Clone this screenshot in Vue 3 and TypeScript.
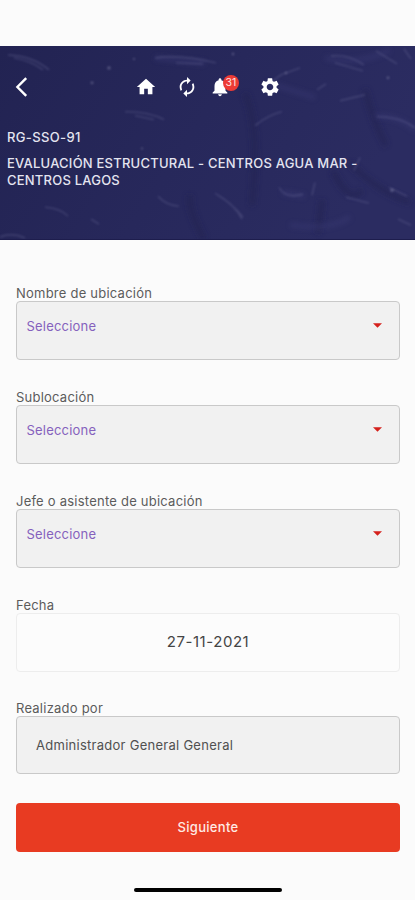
<script setup lang="ts">
interface Field {
  label: string
  value: string
  kind: 'select' | 'date' | 'text'
}

const fields: Field[] = [
  { label: 'Nombre de ubicación', value: 'Seleccione', kind: 'select' },
  { label: 'Sublocación', value: 'Seleccione', kind: 'select' },
  { label: 'Jefe o asistente de ubicación', value: 'Seleccione', kind: 'select' },
  { label: 'Fecha', value: '27-11-2021', kind: 'date' },
  { label: 'Realizado por', value: 'Administrador General General', kind: 'text' },
]
const notifications = 31
</script>

<template>
  <div class="screen">
    <header class="header">
      <svg class="texture" viewBox="0 0 415 194" preserveAspectRatio="none" aria-hidden="true">
        <defs>
          <linearGradient id="sea" x1="0" y1="0" x2="1" y2="0.3">
            <stop offset="0" stop-color="#222352" />
            <stop offset="0.55" stop-color="#27285b" />
            <stop offset="1" stop-color="#2b2c61" />
          </linearGradient>
          <filter id="soft"><feGaussianBlur stdDeviation="0.9" /></filter>
          <filter id="wide"><feGaussianBlur stdDeviation="2.5" /></filter>
        </defs>
        <rect width="415" height="194" fill="url(#sea)" />
        <g fill="none" stroke="#20214f" stroke-width="6" opacity="0.5" filter="url(#wide)">
          <path d="M365 44Q374 78 386 100" />
          <path d="M333 126Q350 160 362 145M350 118Q380 148 410 157" />
          <path d="M245 48Q260 80 252 160M190 150Q188 165 204 194" />
          <path d="M318 188L322 155" />
        </g>
        <g fill="none" stroke="#3a3b74" stroke-width="5" opacity="0.45" filter="url(#wide)">
          <path d="M325 12Q360 20 390 4M375 70Q400 70 415 85M290 180Q330 186 350 172" />
          <path d="M155 12L205 17M268 37L315 52M282 147L305 151" />
        </g>
        <g fill="none" stroke="#686895" stroke-width="1.4" opacity="0.42" filter="url(#soft)">
          <path d="M8 9Q33 10 49 24M14 12Q31 15 43 24" />
          <path d="M155 12Q180 8 216 17M176 17L203 18" />
          <path d="M125 66Q149 66 164 74M135 70L154 74" />
          <path d="M215 148Q231 157 243 172M218 150Q236 161 242 174" />
          <path d="M331 10Q348 8 364 19M335 17L363 25M377 71Q400 71 415 82" />
          <path d="M255 80Q269 69 282 66M269 38L281 29 300 22" />
          <path d="M279 142Q285 154 303 149M315 137L312 150M346 152L369 158" />
          <path d="M45 162Q60 163 68 171M158 151Q166 160 179 161M91 174L99 179" />
          <path d="M376 5L397 18M404 3L411 13M389 142L407 151M317 44L326 38" />
          <path d="M340 55L365 49M360 112L354 125M398 174L411 180M0 192Q12 187 25 193" />
        </g>
        <g fill="#8a8aae" opacity="0.5" filter="url(#soft)">
          <circle cx="109" cy="22" r="1.6" /><circle cx="92" cy="37" r="1.4" />
          <circle cx="134" cy="13" r="1" /><circle cx="233" cy="8" r="1.2" />
          <circle cx="286" cy="27" r="1.2" /><circle cx="388" cy="32" r="1.3" />
          <circle cx="392" cy="145" r="1.7" /><circle cx="142" cy="103" r="1" />
        </g>
      </svg>

      <nav class="toolbar">
        <button class="back" aria-label="Volver">
          <svg viewBox="0 0 14 22"><path d="M12.2 2.2 3.4 11l8.8 8.8" fill="none" stroke="#fff" stroke-width="2.4" /></svg>
        </button>
        <button class="tool home" aria-label="Inicio">
          <svg viewBox="0 0 24 24"><path d="M10 20v-6h4v6h5v-8h3L12 3 2 12h3v8z" /></svg>
        </button>
        <button class="tool sync" aria-label="Actualizar">
          <svg viewBox="0 0 24 24"><path d="M12 6v3l4-4-4-4v3c-4.42 0-8 3.58-8 8 0 1.57.46 3.03 1.24 4.26L6.7 14.8c-.45-.83-.7-1.79-.7-2.8 0-3.31 2.69-6 6-6zm6.76 1.74L17.3 9.2c.44.84.7 1.79.7 2.8 0 3.31-2.69 6-6 6v-3l-4 4 4 4v-3c4.42 0 8-3.58 8-8 0-1.57-.46-3.03-1.24-4.26z" /></svg>
        </button>
        <button class="tool bell" aria-label="Notificaciones">
          <svg viewBox="0 0 24 24"><path d="M12 22c1.1 0 2-.9 2-2h-4c0 1.1.89 2 2 2zm6-6v-5c0-3.07-1.64-5.64-4.5-6.32V4c0-.83-.67-1.5-1.5-1.5s-1.5.67-1.5 1.5v.68C7.63 5.36 6 7.92 6 11v5l-2 2v1h16v-1l-2-2z" /></svg>
          <span class="badge">{{ notifications }}</span>
        </button>
        <button class="tool gear" aria-label="Ajustes">
          <svg viewBox="0 0 24 24"><path d="M19.14 12.94c.04-.3.06-.61.06-.94 0-.32-.02-.64-.07-.94l2.03-1.58c.18-.14.23-.41.12-.61l-1.92-3.32c-.12-.22-.37-.29-.59-.22l-2.39.96c-.5-.38-1.03-.7-1.62-.94l-.36-2.54c-.04-.24-.24-.41-.48-.41h-3.84c-.24 0-.43.17-.47.41l-.36 2.54c-.59.24-1.13.57-1.62.94l-2.39-.96c-.22-.08-.47 0-.59.22L2.74 8.87c-.12.21-.08.47.12.61l2.03 1.58c-.05.3-.09.63-.09.94s.02.64.07.94l-2.03 1.58c-.18.14-.23.41-.12.61l1.92 3.32c.12.22.37.29.59.22l2.39-.96c.5.38 1.03.7 1.62.94l.36 2.54c.05.24.24.41.48.41h3.84c.24 0 .44-.17.47-.41l.36-2.54c.59-.24 1.13-.56 1.62-.94l2.39.96c.22.08.47 0 .59-.22l1.92-3.32c.12-.22.07-.47-.12-.61l-2.01-1.58zM12 15.6c-1.98 0-3.6-1.62-3.6-3.6s1.62-3.6 3.6-3.6 3.6 1.62 3.6 3.6-1.62 3.6-3.6 3.6z" /></svg>
        </button>
      </nav>

      <p class="code">RG-SSO-91</p>
      <h1 class="title">EVALUACIÓN ESTRUCTURAL - CENTROS AGUA MAR - CENTROS LAGOS</h1>
    </header>

    <main class="form">
      <div v-for="field in fields" :key="field.label" class="field">
        <span class="label">{{ field.label }}</span>
        <div class="box" :class="field.kind">
          <span>{{ field.value }}</span>
          <svg v-if="field.kind === 'select'" class="caret" viewBox="0 0 10 5"><path d="M0 0h10L5 5z" /></svg>
        </div>
      </div>
      <button class="submit">Siguiente</button>
    </main>

    <div class="home-indicator"></div>
  </div>
</template>

<style>
body {
  margin: 0;
  background: #fbfbfb;
}
</style>

<style scoped>
.screen {
  box-sizing: border-box;
  display: flex;
  flex-direction: column;
  height: 900px;
  padding: 46px 0 8px;
  overflow: hidden;
  background: #fbfbfb;
  font-family: Inter, sans-serif;
}
button {
  padding: 0;
  border: 0;
  background: none;
  font-family: inherit;
}
.header {
  position: relative;
  box-sizing: border-box;
  flex: none;
  height: 194px;
  padding: 29px 7px 0;
  border-bottom: 1px solid #1d1d4d;
  color: #e4e4f0;
}
.texture {
  position: absolute;
  inset: 0;
  width: 100%;
  height: 100%;
}
.toolbar {
  position: relative;
  display: flex;
  align-items: center;
  height: 24px;
}
.toolbar svg {
  display: block;
  fill: #fff;
}
.back {
  width: 14px;
  margin-left: 7px;
}
.back svg {
  width: 14px;
  height: 22px;
}
.tool {
  position: relative;
  width: 22px;
  height: 22px;
}
.tool svg {
  width: 22px;
  height: 22px;
}
.home {
  margin-left: 107px;
}
.sync {
  margin-left: 19px;
}
.bell {
  margin-left: 11px;
}
.gear {
  margin-left: 28px;
}
.badge {
  position: absolute;
  top: -1px;
  left: 14px;
  width: 16px;
  height: 16px;
  border-radius: 50%;
  background: #ed3b35;
  color: #ffe3e0;
  font-size: 10.5px;
  line-height: 16px;
  text-align: center;
}
.code,
.title {
  position: relative;
  margin: 0;
  font-size: 13px;
  font-weight: 500;
  line-height: 17px;
  letter-spacing: 0.22px;
}
.code {
  margin-top: 30px;
  letter-spacing: 0.35px;
}
.title {
  margin-top: 9px;
}
.form {
  display: flex;
  flex-direction: column;
  gap: 29px;
  padding: 45px 15px 0 16px;
}
.field {
  display: flex;
  flex-direction: column;
}
.field:nth-of-type(5) {
  margin-top: -1px;
}
.label {
  height: 16px;
  color: #5b5b5b;
  font-size: 13px;
  line-height: 16px;
  letter-spacing: 0.23px;
}
.box {
  box-sizing: border-box;
  display: flex;
  height: 59px;
  border: 1px solid #c9c9c9;
  border-radius: 4px;
  background: #f1f1f1;
}
.select {
  justify-content: space-between;
  padding: 16px 17px 0 9.5px;
  color: #8561bd;
  font-size: 13px;
  line-height: 16px;
  letter-spacing: 0.2px;
}
.caret {
  width: 9px;
  height: 5px;
  margin-top: 5px;
  fill: #d5211c;
}
.date {
  align-items: center;
  justify-content: center;
  padding-bottom: 2px;
  border-color: #ededed;
  background: #fcfcfc;
  color: #444;
  font-size: 15px;
  letter-spacing: 0.55px;
}
.text {
  align-items: center;
  height: 58px;
  padding: 0 0 1px 19px;
  color: #505050;
  font-size: 13px;
  letter-spacing: 0.27px;
}
.submit {
  height: 49px;
  padding-bottom: 1px;
  border-radius: 4px;
  background: #e83b22;
  color: #ffeae5;
  font-size: 13px;
  font-weight: 500;
  letter-spacing: 0.3px;
}
.home-indicator {
  width: 148px;
  height: 4px;
  margin: auto auto 0;
  border-radius: 2px;
  background: #000;
}
</style>
